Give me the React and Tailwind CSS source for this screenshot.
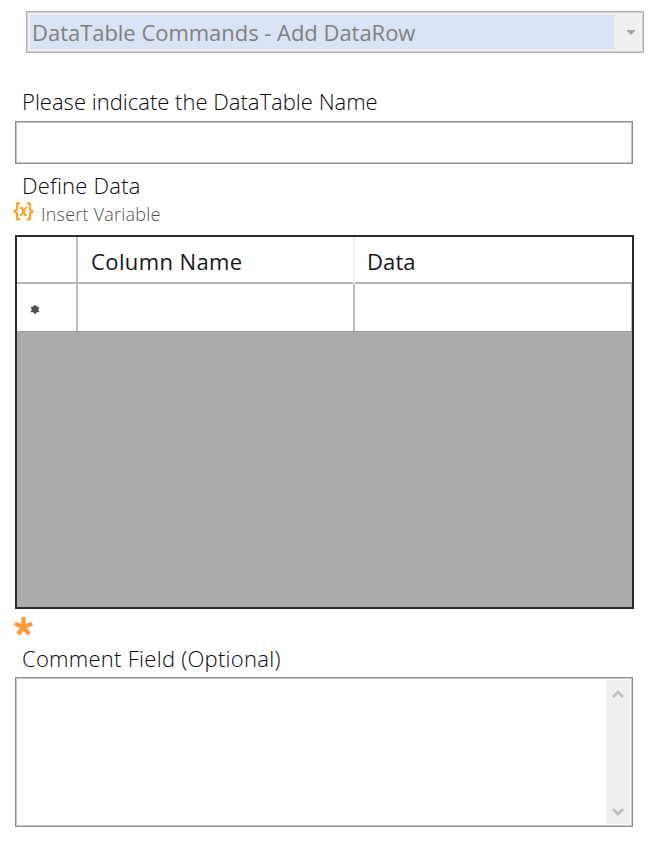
function VariableIcon() {
  return (
    <svg className="mt-[1px]" width="21" height="19" viewBox="0 0 21 19" fill="none" stroke="#ffa126">
      <path d="M7.2 1.3H4.2V7.2L1.6 9.4L4.2 11.6V17.4H7.2" strokeWidth="2.2" />
      <path d="M13.8 1.3H16.8V7.2L19.4 9.4L16.8 11.6V17.4H13.8" strokeWidth="2.2" />
      <path d="M7.1 5.8H8.8L12 13H13.8" strokeWidth="2.2" />
      <path d="M14.2 5.8H12.9L8.1 13H6.8" strokeWidth="1.8" />
    </svg>
  );
}

function Chevron({ d }) {
  return (
    <svg width="12" height="9" viewBox="0 0 12 9" fill="none" stroke="#bfbfbf" strokeWidth="2.8">
      <path d={d} />
    </svg>
  );
}

function Label({ children, spacing }) {
  return (
    <div className={`ml-[22px] h-[30px] whitespace-nowrap text-[22px] leading-[28px] font-light text-[#080808] ${spacing}`}>
      {children}
    </div>
  );
}

export default function App() {
  return (
    <div className="flex h-[842px] w-[656px] flex-col overflow-hidden bg-white pt-[11px] font-['Open_Sans','Noto_Sans',sans-serif]">
      <div className="ml-[26px] flex h-[42px] w-[618px] shrink-0 border border-[#b0b0b0] bg-[#efefef] py-[3px] pl-[3px] shadow-[inset_0_0_0_1px_#d0d0d0]">
        <div className="w-[584px] bg-[#d8e3f5] pl-[2px] text-[22px] leading-[34px] whitespace-nowrap text-[#808080]">
          <span className="tracking-[-0.03px]">DataTable Commands - Add DataRow</span>
        </div>
        <div className="flex flex-1 items-center justify-center pl-1">
          <svg width="8" height="5" viewBox="0 0 8 5" fill="#a3a3a3">
            <path d="M0 0H8V1L4 5L0 1Z" />
          </svg>
        </div>
      </div>

      <div className="mt-[34px] shrink-0">
        <Label spacing="tracking-[0.01px]">Please indicate the DataTable Name</Label>
      </div>
      <div className="mt-[4px] ml-[15px] h-[43px] w-[618px] shrink-0 border border-[#8c8c8c] shadow-[inset_0_0_0_1px_#c8c8c8]" />

      <div className="mt-[7px] shrink-0">
        <Label spacing="tracking-[0.22px]">Define Data</Label>
      </div>
      <div className="ml-[13px] flex h-[24px] shrink-0 items-start gap-[7px]">
        <VariableIcon />
        <span className="text-[18px] leading-[26px] font-light tracking-[0.22px] whitespace-nowrap text-[#505050]">Insert Variable</span>
      </div>

      <div className="mt-[10px] ml-[15px] h-[374px] w-[619px] shrink-0 border-2 border-[#2b2b2b] bg-[#ababab]">
        <div className="grid h-[47px] grid-cols-[61px_277px_277px] border-b-[2px] border-[#b5b5b5] bg-white text-[22px] leading-[48px] text-[#161616]">
          <div className="border-r-2 border-[#bcbcbc]" />
          <div className="border-r-2 border-[#f0f0f0] pl-[13px] tracking-[0.4px]">Column Name</div>
          <div className="pl-[12px] tracking-[0.1px]">Data</div>
        </div>
        <div className="grid h-[48px] grid-cols-[61px_277px_277px] border-b border-[#9b9b9b] bg-white">
          <div className="flex items-center border-r-2 border-[#bcbcbc] pt-[4px] pl-[13px]">
            <svg width="10" height="9" viewBox="0 0 10 9" stroke="#505050" strokeWidth="1.7">
              <circle cx="5" cy="4.5" r="3.4" fill="#505050" stroke="none" />
              <path d="M5 0V9M1 2.2L9 6.8M1 6.8L9 2.2" />
            </svg>
          </div>
          <div className="border-r-2 border-[#bcbcbc]" />
          <div className="border-r border-[#bcbcbc]" />
        </div>
      </div>

      <div className="ml-[14px] flex h-[35px] shrink-0 pt-[8px]">
        <svg width="19" height="19" viewBox="0 0 19 19" stroke="#ff9a35" strokeWidth="4.4">
          <path d="M9.5 10V.3M9.5 10L.8 6.8M9.5 10L18.2 6.8M9.5 10L4 17.2M9.5 10L15 17.2" />
        </svg>
      </div>
      <Label spacing="tracking-[0.27px]">Comment Field (Optional)</Label>
      <div className="mt-[3px] ml-[15px] flex h-[150px] w-[618px] shrink-0 justify-end border border-[#8c8c8c] p-[2px] shadow-[inset_0_0_0_1px_#c8c8c8]">
        <div className="flex w-[24px] flex-col items-center justify-between bg-[#efefef] pt-[9px] pb-[7px]">
          <Chevron d="M1 8L6 3L11 8" />
          <Chevron d="M1 1L6 6L11 1" />
        </div>
      </div>
    </div>
  );
}
